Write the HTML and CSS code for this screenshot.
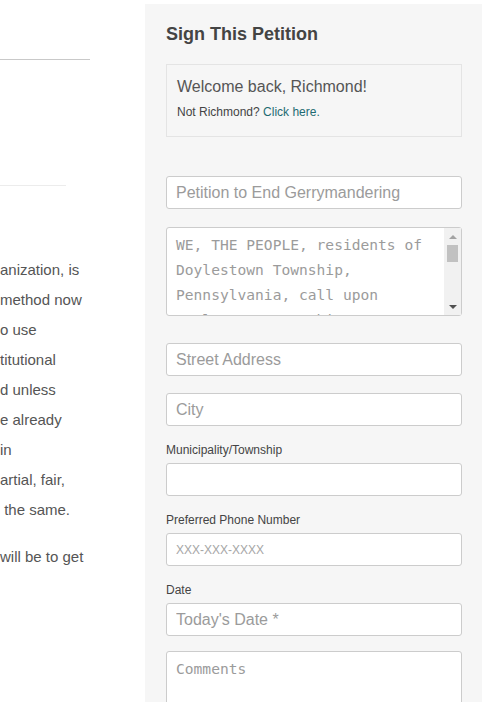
FILE: index.html
```html
<!DOCTYPE html>
<html lang="en">
<head>
<meta charset="utf-8">
<title>Sign This Petition</title>
<link rel="stylesheet" href="styles.css">
</head>
<body>
<div class="page">
  <div class="article">
    <div class="rule rule-dark"></div>
    <div class="rule rule-light"></div>
    <div class="copy">
      <p>anization, is<br>method now<br>o use<br>titutional<br>d unless<br>e already<br>in<br>artial, fair,<br>&nbsp;the same.</p>
      <p>will be to get</p>
    </div>
  </div>
  <aside class="panel">
    <h2 class="panel-title">Sign This Petition</h2>
    <div class="welcome">
      <div class="welcome-title">Welcome back, Richmond!</div>
      <div class="welcome-note">Not Richmond? <a href="#" class="welcome-link">Click here.</a></div>
    </div>
    <form class="petition-form">
      <input class="field gap-18" type="text" placeholder="Petition to End Gerrymandering">
      <div class="message gap-27">
        <textarea class="field field-area field-message">WE, THE PEOPLE, residents of Doylestown Township, Pennsylvania, call upon Doylestown Township supervisors to adopt a fair redistricting process.</textarea>
        <div class="scrollbar">
          <div class="scroll-btn"><span class="arrow arrow-up"></span></div>
          <div class="scroll-thumb"></div>
          <div class="scroll-fill"></div>
          <div class="scroll-btn"><span class="arrow arrow-down"></span></div>
        </div>
      </div>
      <input class="field gap-17" type="text" placeholder="Street Address">
      <input class="field gap-17" type="text" placeholder="City">
      <div class="group gap-17">
        <label class="label">Municipality/Township</label>
        <input class="field" type="text">
      </div>
      <div class="group gap-17">
        <label class="label">Preferred Phone Number</label>
        <input class="field field-small" type="text" placeholder="XXX-XXX-XXXX">
      </div>
      <div class="group gap-15">
        <label class="label">Date</label>
        <input class="field" type="text" placeholder="Today's Date *">
      </div>
      <textarea class="field field-area field-comments" placeholder="Comments"></textarea>
    </form>
  </aside>
</div>
</body>
</html>
```
FILE: styles.css
```css
html, body {
  margin: 0;
  padding: 0;
  background: #fff;
  overflow: hidden;
}

body {
  font-family: "Liberation Sans", Arial, sans-serif;
  color: #555;
}

.page {
  display: flex;
  align-items: flex-start;
  width: 498px;
  height: 702px;
  overflow: hidden;
}

.article {
  width: 145px;
  flex: none;
  overflow: hidden;
}

.rule {
  height: 1px;
}

.rule-dark {
  width: 90px;
  margin-top: 59px;
  background: #c9c9c9;
}

.rule-light {
  width: 66px;
  margin-top: 125px;
  background: #ececec;
}

.copy {
  margin-top: 69px;
}

.copy p {
  margin: 0 0 17px;
  font-size: 15px;
  line-height: 30px;
  color: #555;
  white-space: nowrap;
}

.panel {
  width: 337px;
  flex: none;
  box-sizing: border-box;
  margin-top: 4px;
  min-height: 720px;
  padding: 20px 20px 0 21px;
  background: #f6f6f6;
}

.panel-title {
  margin: 0 0 20px;
  font-size: 18px;
  line-height: 20px;
  font-weight: bold;
  color: #444;
}

.welcome {
  border: 1px solid #e4e4e4;
  padding: 12px 10px 16px;
  margin-bottom: 39px;
}

.welcome-title {
  font-size: 16px;
  line-height: 20px;
  color: #555;
  margin-bottom: 7px;
}

.welcome-note {
  font-size: 12px;
  line-height: 16px;
  color: #444;
}

.welcome-link {
  color: #1e6b72;
  text-decoration: none;
}

.petition-form {
  display: flex;
  flex-direction: column;
}

.field {
  display: block;
  width: 100%;
  box-sizing: border-box;
  height: 33px;
  margin: 0;
  padding: 0 9px;
  border: 1px solid #ccc;
  border-radius: 3px;
  background: #fff;
  font-family: "Liberation Sans", Arial, sans-serif;
  font-size: 16px;
  color: #555;
  outline: none;
}

.field::placeholder {
  color: #9b9b9b;
  opacity: 1;
}

.field-small {
  font-size: 12px;
}

.field-small::placeholder {
  color: #a6a6a6;
}

.gap-18 { margin-bottom: 18px; }
.gap-27 { margin-bottom: 27px; }
.gap-17 { margin-bottom: 17px; }
.gap-15 { margin-bottom: 15px; }

.group {
  display: flex;
  flex-direction: column;
}

.label {
  font-size: 12px;
  line-height: 15px;
  color: #444;
  margin-bottom: 5px;
}

.field-area {
  resize: none;
  overflow: hidden;
  padding: 4px 27px 0 9px;
  font-family: "DejaVu Sans Mono", "Liberation Mono", monospace;
  font-size: 14.6px;
  line-height: 25px;
  color: #9b9b9b;
}

.field-message {
  height: 89px;
}

.field-comments {
  height: 90px;
}

.message {
  position: relative;
}

.scrollbar {
  position: absolute;
  top: 1px;
  right: 1px;
  bottom: 1px;
  width: 17px;
  background: #f1f1f1;
  display: flex;
  flex-direction: column;
}

.scroll-btn {
  height: 17px;
  flex: none;
  display: flex;
  align-items: center;
  justify-content: center;
}

.scroll-thumb {
  flex: none;
  height: 17px;
  margin: 0 3px;
  background: #c1c1c1;
}

.scroll-fill {
  flex: 1;
}

.arrow {
  width: 0;
  height: 0;
  border-left: 4px solid transparent;
  border-right: 4px solid transparent;
}

.arrow-up {
  border-bottom: 4px solid #a3a3a3;
}

.arrow-down {
  border-top: 4px solid #505050;
}
```
